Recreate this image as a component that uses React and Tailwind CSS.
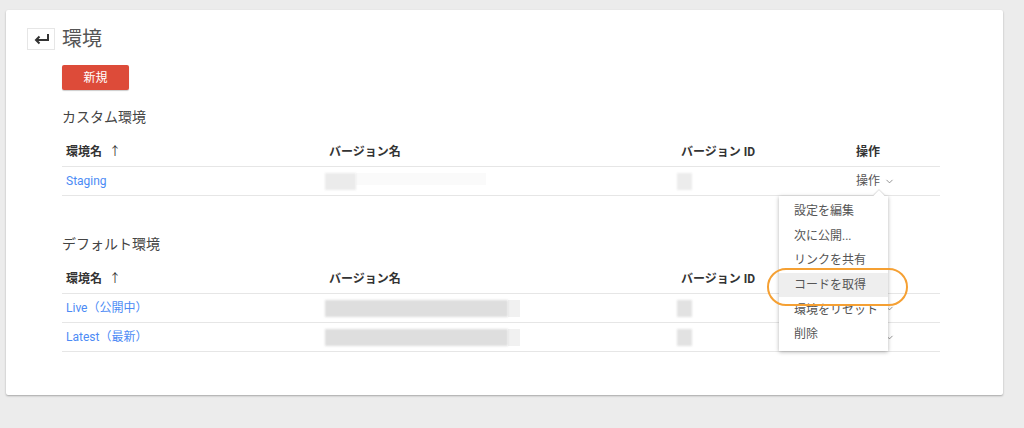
import { ChevronDown } from "lucide-react";

const font = { fontFamily: 'Roboto, "Noto Sans CJK JP", sans-serif' };

const menuItems = ["設定を編集", "次に公開...", "リンクを共有", "コードを取得", "環境をリセット", "削除"];

// Blurred placeholder for hidden values
function Blur({ w, shade = "bg-[#e4e4e4]" }) {
  return <div className={`h-[17px] ${shade} blur-[1px]`} style={{ width: w }} />;
}

function HeaderRow({ showAction = true }) {
  return (
    <div className="flex h-[30px] items-center border-b border-[#e6e6e6] pt-[1px] text-[12px] font-bold text-[#333]">
      <div className="w-[263px] pl-1">環境名 <span className="ml-1 font-normal">↑</span></div>
      <div className="w-[352px] pl-1">バージョン名</div>
      <div className="w-[175px] pl-1">バージョン ID</div>
      <div className="flex-1 pl-1">{showAction ? "操作" : ""}</div>
    </div>
  );
}

function Row({ name, nameW, idShade, wide, covered }) {
  return (
    <div className="flex h-[29px] items-center border-b border-[#e6e6e6] text-[12px]">
      <div className="w-[263px] pl-1 text-[#4c8bf5]">{name}</div>
      <div className="w-[352px]">
        {wide ? (
          <div className="flex">
            <Blur w={nameW} shade="bg-[#dedede]" />
            <div className="h-[17px] w-[12px] bg-[#f1f1f1]" />
          </div>
        ) : (
          <div className="flex">
            <Blur w={nameW} shade="bg-[#ebebeb]" />
            <div className="h-[12px] w-[130px] bg-[#fafafa]" />
          </div>
        )}
      </div>
      <div className="w-[175px]">
        <Blur w={15} shade={idShade} />
      </div>
      <div className="flex flex-1 items-center pl-1 text-[#555]">
        {covered ? <span className="w-[24px]" /> : "操作"}
        <ChevronDown size={11} strokeWidth={1.5} className="ml-1 text-[#666]" />
      </div>
    </div>
  );
}

export default function App() {
  return (
    <div className="h-[428px] w-[1024px] bg-[#ececec] pl-[6px] pt-[10px]" style={font}>
      <div className="relative h-[385px] w-[997px] rounded-[2px] bg-white pl-[21px] pt-[18px] shadow-[0_1px_2px_rgba(0,0,0,0.3)]">
        {/* Title bar */}
        <div className="flex h-[22px] items-center">
          <button className="flex h-[22px] w-[28px] items-center justify-center border border-[#e6e6e6] bg-white">
            <svg width="17" height="12" viewBox="0 0 17 12" fill="none" stroke="#333" strokeWidth="2">
              <path d="M15 1v6H3" />
              <path d="M6.5 3.5L3 7l3.5 3.5" />
            </svg>
          </button>
          <h1 className="ml-[7px] text-[20px] leading-none text-[#555]">環境</h1>
        </div>

        <div className="ml-[35px] w-[878px]">
          <button className="mt-[15px] flex h-[25px] w-[67px] items-center justify-center rounded-[2px] bg-[#dd4b39] text-[12px] text-white shadow-[0_1px_1px_rgba(0,0,0,0.2)]">
            新規
          </button>

          <h2 className="mt-[17px] h-[20px] text-[14px] leading-[20px] text-[#444]">カスタム環境</h2>
          <div className="mt-[10px]">
            <HeaderRow />
            <Row name="Staging" nameW={31} idShade="bg-[#ececec]" />
          </div>

          <h2 className="mt-[38px] h-[20px] text-[14px] leading-[20px] text-[#444]">デフォルト環境</h2>
          <div className="mt-[10px]">
            <HeaderRow showAction={false} />
            <Row name="Live（公開中）" nameW={183} idShade="bg-[#e2e2e2]" wide covered />
            <Row name="Latest（最新）" nameW={183} idShade="bg-[#e2e2e2]" wide covered />
          </div>
        </div>

        {/* Actions dropdown */}
        <div className="absolute left-[773px] top-[186px] z-10 w-[109px] bg-white pb-[4px] pt-[3px] text-[12px] text-[#555] shadow-[0_1px_4px_rgba(0,0,0,0.3)]">
          <div className="absolute -top-[4px] left-[96px] h-[8px] w-[8px] rotate-45 bg-white shadow-[-1px_-1px_1px_rgba(0,0,0,0.12)]" />
          {menuItems.map((item) => (
            <div
              key={item}
              className={`relative flex h-[24.6px] items-center pl-[15px] ${item === "コードを取得" ? "bg-[#eeeeee]" : ""}`}
            >
              {item}
            </div>
          ))}
        </div>

        {/* Highlight ring */}
        <div className="absolute left-[761px] top-[258px] z-20 h-[38px] w-[141px] rounded-full border-2 border-[#f5a033]" />
      </div>
    </div>
  );
}
